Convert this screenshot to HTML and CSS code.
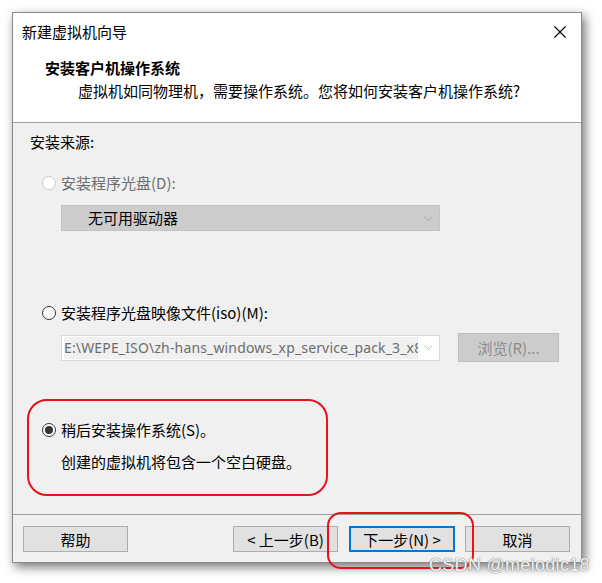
FILE: index.html
```html
<!DOCTYPE html>
<html lang="zh-CN">
<head>
<meta charset="utf-8">
<title>新建虚拟机向导</title>
<link rel="stylesheet" href="styles.css">
</head>
<body>
<div class="window">
  <div class="titlebar">
    <span class="title">新建虚拟机向导</span>
    <svg class="close" width="12" height="12" viewBox="0 0 12 12"><path d="M0.5 0.5 L11.5 11.5 M11.5 0.5 L0.5 11.5" stroke="#000" stroke-width="1.1" fill="none"/></svg>
  </div>
  <div class="header">
    <div class="h-title">安装客户机操作系统</div>
    <div class="h-sub">虚拟机如同物理机，需要操作系统。您将如何安装客户机操作系统?</div>
  </div>
  <div class="body">
    <div class="label">安装来源:</div>
    <div class="radio-row disabled">
      <span class="radio"></span><span>安装程序光盘(D):</span>
    </div>
    <div class="select gray">
      <span class="select-text">无可用驱动器</span>
      <svg class="chev" width="9" height="5" viewBox="0 0 9 5"><path d="M0.5 0.5 L4.5 4.5 L8.5 0.5" stroke="#a8a8a8" fill="none"/></svg>
    </div>
    <div class="radio-row r2">
      <span class="radio"></span><span>安装程序光盘映像文件(iso)(M):</span>
    </div>
    <div class="iso-row">
      <div class="select light">
        <span class="path">E:\WEPE_ISO\zh-hans_windows_xp_service_pack_3_x86</span>
        <svg class="chev" width="9" height="5" viewBox="0 0 9 5"><path d="M0.5 0.5 L4.5 4.5 L8.5 0.5" stroke="#c4c4c4" fill="none"/></svg>
      </div>
      <div class="browse">浏览(R)...</div>
    </div>
    <div class="radio-row r3">
      <span class="radio checked"></span><span>稍后安装操作系统(S)。</span>
    </div>
    <div class="desc">创建的虚拟机将包含一个空白硬盘。</div>
  </div>
  <div class="footer">
    <div class="btn">帮助</div>
    <div class="spacer"></div>
    <div class="btn">&lt; 上一步(B)</div>
    <div class="btn primary">下一步(N) &gt;</div>
    <div class="btn">取消</div>
  </div>
</div>
<div class="mark mark1"></div>
<div class="mark mark2"></div>
<div class="watermark">CSDN @melodic18</div>
</body>
</html>
```
FILE: styles.css
```css
html, body {
  margin: 0;
  padding: 0;
  background: #ffffff;
}
body {
  padding: 12px 0 0 12px;
  font-family: "Noto Sans CJK SC", "Noto Sans", sans-serif;
  font-size: 15px;
  color: #000;
  position: relative;
  width: 602px;
  height: 583px;
  box-sizing: border-box;
  overflow: hidden;
}
.window {
  width: 570px;
  height: 551px;
  box-sizing: border-box;
  border: 1px solid #8a8a8a;
  background: #f0f0f0;
  box-shadow: 3px 4px 10px rgba(0,0,0,0.55);
  display: flex;
  flex-direction: column;
}
.titlebar {
  height: 38px;
  background: #fff;
  display: flex;
  align-items: center;
  justify-content: space-between;
  padding: 0 15px 0 9px;
  line-height: 38px;
}
.title { font-size: 15px; }
.close { margin-top: -1px; }
.header {
  background: #fff;
  border-bottom: 1px solid #a0a0a0;
  padding-top: 8px;
  box-sizing: border-box;
  height: 72px;
  line-height: 18px;
}
.h-title {
  font-weight: bold;
  padding-left: 32px;
  font-size: 15px;
}
.h-sub {
  padding-left: 65px;
  margin-top: 5px;
}
.body {
  flex: 1;
  padding: 10px 0 0 17px;
  line-height: 18px;
  border-bottom: 1px solid #a0a0a0;
}
.radio-row {
  display: flex;
  align-items: center;
  margin-top: 23px;
  margin-left: 12px;
}
.radio-row.r2 { margin-top: 73px; }
.radio-row.r3 { margin-top: 59px; }
.radio {
  width: 14px;
  height: 14px;
  box-sizing: border-box;
  border-radius: 50%;
  border: 1px solid #333;
  background: #fff;
  margin-right: 5px;
  position: relative;
}
.radio.checked::after {
  content: "";
  position: absolute;
  left: 2px; top: 2px;
  width: 8px; height: 8px;
  border-radius: 50%;
  background: #333;
}
.disabled { color: #6d6d6d; }
.disabled .radio { border-color: #cccccc; }
.select {
  width: 379px;
  height: 26px;
  box-sizing: border-box;
  margin-left: 31px;
  display: flex;
  align-items: center;
  justify-content: space-between;
  padding-right: 6px;
}
.select.gray {
  margin-top: 13px;
  background: #cccccc;
  border: 1px solid #c4c4c4;
  padding-left: 26px;
}
.select.light {
  background: #fff;
  border: 1px solid #d9d9d9;
  padding-left: 2px;
  margin-left: 0;
}
.path {
  display: block;
  width: 354px;
  overflow: hidden;
  white-space: nowrap;
  background: #f0f0f0;
  color: #6d6d6d;
  line-height: 22px;
  font-family: "Noto Sans", "Noto Sans CJK SC", sans-serif;
  font-size: 14px;
  letter-spacing: 0.15px;
}
.iso-row {
  display: flex;
  align-items: center;
  margin-top: 11px;
  margin-left: 31px;
}
.browse {
  margin-left: 18px;
  width: 101px;
  height: 29px;
  box-sizing: border-box;
  background: #cccccc;
  border: 1px solid #bfbfbf;
  color: #8d8d8d;
  display: flex;
  align-items: center;
  justify-content: center;
}
.desc {
  margin: 14px 0 0 31px;
}
.footer {
  height: 47px;
  box-sizing: border-box;
  display: flex;
  align-items: flex-start;
  padding: 11px 11px 0 10px;
}
.spacer { flex: 1; }
.btn {
  width: 105px;
  height: 26px;
  box-sizing: border-box;
  background: #e1e1e1;
  border: 1px solid #adadad;
  display: flex;
  align-items: center;
  justify-content: center;
  margin-left: 11px;
}
.btn:first-child { margin-left: 0; }
.btn.primary {
  border: 2px solid #0078d7;
  width: 106px;
}
.btn:last-child { margin-left: 10px; }
.mark {
  position: absolute;
  border: 2px solid #e8121a;
  box-sizing: border-box;
}
.mark1 {
  left: 27px; top: 399px;
  width: 301px; height: 97px;
  border-radius: 20px;
}
.mark2 {
  left: 327px; top: 512px;
  width: 147px; height: 57px;
  border-radius: 14px;
}
.watermark {
  position: absolute;
  left: 429px;
  top: 555px;
  font-family: "Liberation Sans", sans-serif;
  font-size: 18px;
  color: #f2f2f2;
  text-shadow: 0 0 1px #7a7a7a, 0 0 1px #7a7a7a;
  white-space: nowrap;
  letter-spacing: 0.3px;
}
```
